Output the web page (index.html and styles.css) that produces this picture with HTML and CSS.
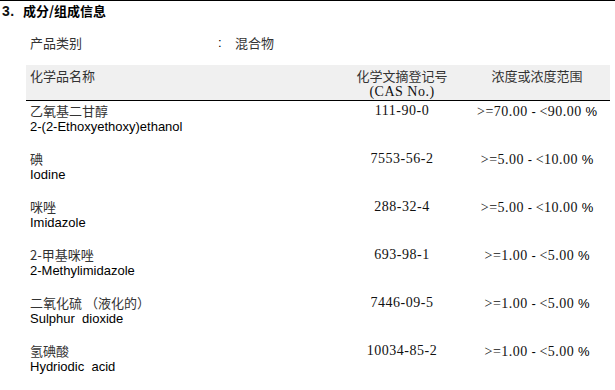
FILE: index.html
```html
<!DOCTYPE html>
<html lang="zh">
<head>
<meta charset="utf-8">
<link rel="stylesheet" href="styles.css">
</head>
<body>
<div class="page">
  <h2 class="title"><span class="num">3.</span>成分/组成信息</h2>
  <div class="prodtype">
    <span class="pt-label cn">产品类别</span>
    <span class="pt-colon">:</span>
    <span class="cn">混合物</span>
  </div>
  <div class="table">
    <div class="row head">
      <div class="c-name cn">化学品名称</div>
      <div class="c-cas"><div class="cn">化学文摘登记号</div><div class="num">(CAS No.)</div></div>
      <div class="c-conc cn">浓度或浓度范围</div>
    </div>
    <div class="row">
      <div class="c-name"><div class="cn">乙氧基二甘醇</div><div class="en">2-(2-Ethoxyethoxy)ethanol</div></div>
      <div class="c-cas num">111-90-0</div>
      <div class="c-conc"><span class="num">&gt;=70.00</span><span class="en"> - </span><span class="num">&lt;90.00</span><span class="en"> %</span></div>
    </div>
    <div class="row">
      <div class="c-name"><div class="cn">碘</div><div class="en">Iodine</div></div>
      <div class="c-cas num">7553-56-2</div>
      <div class="c-conc"><span class="num">&gt;=5.00</span><span class="en"> - </span><span class="num">&lt;10.00</span><span class="en"> %</span></div>
    </div>
    <div class="row">
      <div class="c-name"><div class="cn">咪唑</div><div class="en">Imidazole</div></div>
      <div class="c-cas num">288-32-4</div>
      <div class="c-conc"><span class="num">&gt;=5.00</span><span class="en"> - </span><span class="num">&lt;10.00</span><span class="en"> %</span></div>
    </div>
    <div class="row">
      <div class="c-name"><div class="cn">2-甲基咪唑</div><div class="en">2-Methylimidazole</div></div>
      <div class="c-cas num">693-98-1</div>
      <div class="c-conc"><span class="num">&gt;=1.00</span><span class="en"> - </span><span class="num">&lt;5.00</span><span class="en"> %</span></div>
    </div>
    <div class="row">
      <div class="c-name"><div class="cn">二氧化硫 （液化的）</div><div class="en">Sulphur&nbsp; dioxide</div></div>
      <div class="c-cas num">7446-09-5</div>
      <div class="c-conc"><span class="num">&gt;=1.00</span><span class="en"> - </span><span class="num">&lt;5.00</span><span class="en"> %</span></div>
    </div>
    <div class="row">
      <div class="c-name"><div class="cn">氢碘酸</div><div class="en">Hydriodic&nbsp; acid</div></div>
      <div class="c-cas num">10034-85-2</div>
      <div class="c-conc"><span class="num">&gt;=1.00</span><span class="en"> - </span><span class="num">&lt;5.00</span><span class="en"> %</span></div>
    </div>
  </div>
</div>
</body>
</html>
```
FILE: styles.css
```css
html, body {
  margin: 0;
  padding: 0;
  background: #fff;
}
body {
  font-family: "Noto Sans CJK SC", "Liberation Sans", sans-serif;
  font-size: 13px;
  color: #000;
}
.page {
  border-top: 1px solid #000;
  width: 615px;
  height: 389px;
  overflow: hidden;
}
.title {
  margin: 1px 0 0 0;
  padding-left: 2px;
  font-size: 13px;
  line-height: 17px;
  font-weight: bold;
  font-family: "Noto Sans CJK SC", sans-serif;
  color: #000;
}
.title .num {
  font-family: "Liberation Sans", sans-serif;
  display: inline-block;
  width: 21px;
}
.prodtype {
  margin-top: 16px;
  padding-left: 30px;
  display: flex;
  line-height: 16px;
}
.pt-label {
  width: 188px;
}
.pt-colon {
  width: 17px;
  font-family: "Liberation Sans", sans-serif;
}
.cn {
  font-family: "Noto Sans CJK SC", sans-serif;
  color: #333;
  font-size: 13px;
  line-height: 16px;
}
.en {
  font-family: "Liberation Sans", sans-serif;
  font-size: 13px;
  line-height: 16px;
  color: #000;
}
.num {
  font-family: "Liberation Serif", serif;
  font-size: 14px;
  letter-spacing: 0.5px;
  line-height: 16px;
  color: #111;
}
.table {
  margin: 14px 0 0 26px;
  width: 584px;
}
.row {
  display: grid;
  grid-template-columns: 314px 124px 146px;
  height: 48px;
  padding-top: 2px;
  box-sizing: border-box;
  line-height: 16px;
}
.row.head {
  background: #f0f0f0;
  height: 36px;
  padding-top: 3px;
  border-bottom: 1px solid #000;
}
.c-name {
  padding-left: 4px;
}
.c-cas {
  text-align: center;
}
.c-conc {
  text-align: center;
  white-space: nowrap;
}
```
